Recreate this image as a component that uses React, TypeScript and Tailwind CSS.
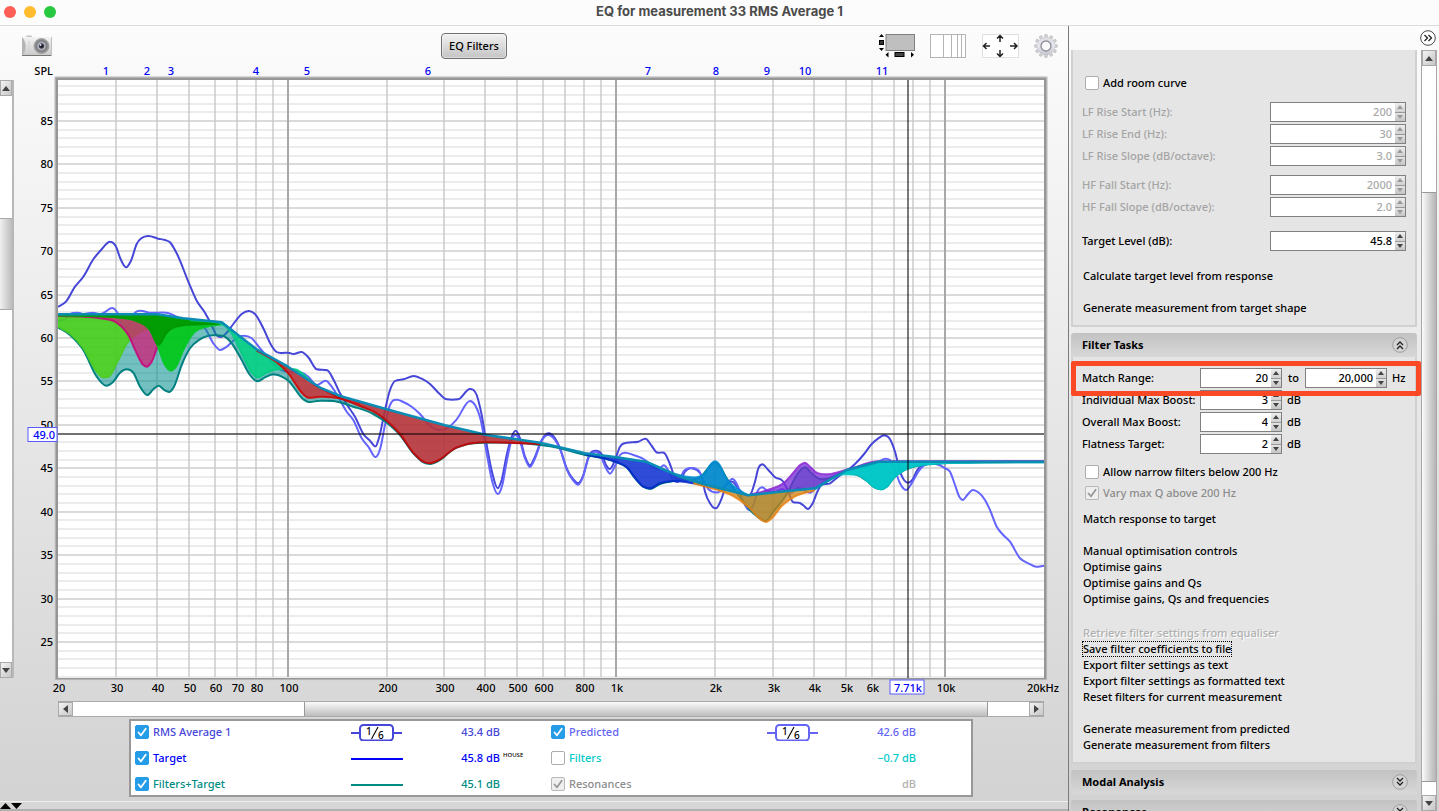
import React from "react";

type Point = [number, number];

/* ---------- chart geometry ---------- */

const PLOT = { left: 58, right: 1044, top: 80, bottom: 678 };

const xOf = (hz: number) => 287.6 + 328.7 * Math.log10(hz / 100);
const yOf = (db: number) => 121 + (85 - db) * 8.683;

/* Samples are kept in thirds of a chart unit, relative to a tile origin. */
const tile = (ox: number, oy: number, flat: number[]): Point[] => {
  const out: Point[] = [];
  for (let i = 0; i < flat.length; i += 2) out.push([ox + flat[i] / 3, oy + flat[i + 1] / 3]);
  return out;
};
const A = (f: number[]) => tile(50, 210, f);
const B = (f: number[]) => tile(240, 330, f);
const C = (f: number[]) => tile(520, 420, f);
const D = (f: number[]) => tile(730, 420, f);

/* Cubic Hermite curve with tangents weighted by the distance between samples. */
const smooth = (p: Point[]) => {
  const n = p.length;
  const slope = (i: number) => (p[i + 1][1] - p[i][1]) / (p[i + 1][0] - p[i][0]);
  const tangents = p.map((_, i) => {
    if (i === 0) return slope(0);
    if (i === n - 1) return slope(n - 2);
    const before = p[i][0] - p[i - 1][0];
    const after = p[i + 1][0] - p[i][0];
    const a = slope(i - 1);
    const b = slope(i);
    const mean = (a * after + b * before) / (before + after);
    if (a * b <= 0) return mean * 0.35;
    const limit = 3 * Math.min(Math.abs(a), Math.abs(b));
    return Math.sign(mean) * Math.min(Math.abs(mean), limit);
  });
  let d = `M${p[0][0].toFixed(1)} ${p[0][1].toFixed(1)}`;
  for (let i = 0; i < n - 1; i++) {
    const h = (p[i + 1][0] - p[i][0]) / 3;
    const c = [
      p[i][0] + h,
      p[i][1] + h * tangents[i],
      p[i + 1][0] - h,
      p[i + 1][1] - h * tangents[i + 1],
      p[i + 1][0],
      p[i + 1][1],
    ].map((v) => v.toFixed(1));
    d += `C${c.join(" ")}`;
  }
  return d;
};

const target: Point[] = [
  ...A([24, 313, 320, 313, 400, 325, 515, 337, 620, 418, 714, 470]),
  ...B([240, 173, 300, 198, 440, 238, 615, 286, 740, 315, 900, 338]),
  ...C([90, 75, 195, 100, 290, 112, 378, 125, 480, 170, 560, 195, 685, 226]),
  ...D([150, 215, 255, 205, 350, 150, 445, 125, 942, 125]),
];

const linear = (p: Point[]) => p.map(([x, y], i) => `${i ? "L" : "M"}${x.toFixed(1)} ${y.toFixed(1)}`).join("");

const targetAt = (x: number): number => {
  for (let i = 1; i < target.length; i++) {
    if (x <= target[i][0]) {
      const [x0, y0] = target[i - 1];
      const [x1, y1] = target[i];
      return y0 + ((y1 - y0) * (x - x0)) / (x1 - x0);
    }
  }
  return target[target.length - 1][1];
};

/* Area enclosed by a curve and the target line. */
const area = (p: Point[]) => {
  const x0 = p[0][0];
  const x1 = p[p.length - 1][0];
  const back: Point[] = [
    [x0, targetAt(x0)] as Point,
    ...target.filter(([x]) => x > x0 && x < x1),
    [x1, targetAt(x1)] as Point,
  ].reverse();
  return smooth(p) + back.map(([x, y]) => `L${x.toFixed(1)} ${y.toFixed(1)}`).join("") + "Z";
};

const measured: Point[] = [
  ...A([24, 291, 48, 275, 75, 230, 100, 200, 130, 148, 155, 118, 180, 95, 197, 108, 212, 148, 228, 172, 243, 152, 260, 102, 275, 84, 295, 78, 325, 86, 345, 90, 360, 97, 380, 130, 417, 220, 440, 272, 465, 308, 482, 340, 500, 376, 512, 381, 530, 368, 550, 342, 575, 312, 597, 303, 615, 312, 640, 355, 665, 408]),
  ...B([110, 66, 125, 69, 145, 68, 160, 72, 185, 66, 205, 82, 230, 118, 262, 121, 280, 148, 300, 190, 322, 226, 345, 260, 370, 312, 390, 332, 407, 349, 418, 320, 435, 240, 450, 180, 465, 153, 490, 148, 522, 138, 545, 146, 570, 162, 600, 193, 620, 208, 655, 208, 690, 177, 710, 195, 725, 255, 740, 345, 757, 430, 773, 475, 785, 450, 800, 375, 815, 320, 827, 302, 840, 325, 855, 380]),
  ...C([30, 136, 45, 110, 65, 60, 85, 40, 105, 55, 120, 85, 140, 145, 160, 178, 175, 190, 190, 165, 205, 112, 228, 92, 245, 103, 258, 135, 270, 147, 285, 120, 300, 80, 320, 68, 355, 65, 377, 56, 395, 78, 412, 98, 432, 98, 447, 125, 465, 172, 480, 182, 495, 155, 510, 145, 530, 150, 545, 170, 555, 215, 570, 250, 588, 265, 605, 235, 620, 192, 637, 185, 655, 205, 670, 222, 690, 225, 705, 185, 715, 145]),
  ...D([97, 133, 115, 150, 135, 172, 158, 183, 172, 208, 190, 247, 207, 248, 220, 256, 234, 267, 248, 250, 262, 215, 275, 195, 300, 190, 325, 170, 350, 153, 375, 132, 400, 105, 425, 72, 445, 55, 462, 46, 480, 58, 495, 95, 510, 155, 522, 180, 534, 188, 548, 178, 562, 150, 578, 135, 600, 130, 625, 133]),
];

const predicted: Point[] = [
  ...A([24, 332, 45, 328, 60, 312, 85, 308, 100, 312, 130, 308, 150, 313, 165, 306, 187, 294, 203, 310, 215, 340, 230, 350, 243, 335, 255, 308, 270, 302, 300, 308, 350, 308, 380, 320, 410, 332, 440, 342, 465, 355, 490, 400, 510, 420, 530, 410, 550, 392, 580, 377, 605, 385, 630, 415, 660, 450, 690, 478, 720, 486, 750, 487, 775, 500]),
  ...B([230, 165, 258, 152, 275, 170, 300, 210, 320, 245, 340, 270, 365, 325, 385, 350, 407, 381, 420, 358, 435, 285, 450, 225, 470, 209, 490, 216, 515, 230, 540, 252, 570, 287, 600, 300, 620, 296, 650, 268, 690, 213, 705, 225, 722, 270, 740, 370, 757, 455, 773, 492, 787, 465, 800, 395, 815, 330, 827, 315, 840, 335, 855, 385]),
  ...C([30, 141, 45, 115, 65, 62, 85, 45, 105, 60, 122, 92, 140, 148, 160, 182, 175, 194, 190, 168, 205, 115, 228, 95, 242, 108, 258, 145, 270, 161, 285, 138, 300, 105, 315, 98, 340, 105, 375, 120, 400, 142, 415, 147, 432, 136, 447, 155, 460, 182, 475, 185, 490, 155, 510, 144, 535, 150, 550, 180, 565, 207, 595, 217, 610, 205]),
  ...D([8, 177, 22, 195, 40, 245, 58, 271, 72, 250, 82, 215, 97, 202, 112, 212, 135, 215, 158, 207, 180, 220, 205, 203, 240, 218, 258, 205, 290, 180, 330, 160, 400, 143, 440, 130, 465, 116, 480, 120, 495, 150, 510, 190, 528, 210, 545, 190, 565, 155, 580, 138, 600, 131, 628, 135, 645, 145, 660, 155, 675, 195, 688, 230, 698, 240, 712, 225, 728, 210, 745, 217, 765, 240, 780, 270, 800, 320, 820, 345, 840, 365, 870, 415, 895, 430, 918, 440, 942, 437]),
];

const filtered: Point[] = [
  ...A([24, 352, 60, 375, 100, 420, 140, 500, 168, 527, 190, 515, 210, 488, 230, 478, 250, 488, 270, 530, 292, 555, 310, 538, 326, 527, 343, 540, 358, 546, 372, 530, 395, 465, 420, 415, 450, 388, 490, 376, 520, 378, 545, 400, 575, 450, 600, 495, 622, 514, 645, 502, 670, 493, 700, 502]),
  ...B([145, 152, 190, 208, 205, 216, 240, 212, 280, 213, 340, 230, 400, 252, 440, 278, 480, 315, 520, 370, 550, 397, 570, 402, 600, 390, 640, 358, 680, 343, 730, 338, 820, 338, 900, 345]),
  ...C([90, 79, 195, 105, 285, 125, 320, 142, 350, 180, 370, 200, 390, 207, 420, 192, 460, 183, 500, 180, 540, 172, 560, 150, 575, 132, 585, 127, 600, 140, 620, 175, 640, 205, 670, 245, 700, 280, 725, 298]),
  ...D([107, 303, 130, 275, 172, 220, 200, 165, 225, 142, 245, 160, 270, 177, 300, 175, 340, 160, 380, 164, 410, 182, 435, 203, 453, 208, 470, 200, 490, 175, 520, 152, 560, 138, 620, 131, 720, 128, 942, 127]),
];

const filterAreas: { points: Point[]; fill: string; stroke: string; opacity: number }[] = [
  { points: A([24, 350, 60, 371, 100, 415, 140, 485, 158, 502, 176, 500, 200, 460, 230, 402, 270, 366, 320, 350, 400, 340, 515, 341]), fill: "#4cd214", stroke: "#4ccc20", opacity: 0.85 },
  { points: A([24, 317, 150, 325, 200, 338, 235, 375, 260, 430, 280, 465, 291, 470, 305, 455, 325, 405, 350, 368, 400, 346, 515, 341]), fill: "#d21e78", stroke: "#c8007a", opacity: 0.75 },
  { points: A([24, 316, 200, 322, 260, 333, 300, 360, 320, 400, 345, 465, 363, 482, 378, 470, 400, 420, 430, 370, 470, 350, 515, 343]), fill: "#00c814", stroke: "#00c820", opacity: 0.9 },
  { points: A([24, 316, 200, 322, 260, 333, 300, 360, 325, 405, 350, 368, 400, 346, 515, 341]), fill: "#009600", stroke: "#009600", opacity: 0.85 },
  { points: A([420, 330, 515, 342, 545, 370, 580, 440, 605, 488, 622, 502, 650, 488, 685, 478, 735, 478, 800, 528, 870, 558]), fill: "#00d282", stroke: "#00cc80", opacity: 0.85 },
  { points: B([50, 62, 110, 97, 145, 130, 190, 193, 205, 203, 240, 200, 300, 205, 360, 222]), fill: "#cd2830", stroke: "#d20000", opacity: 0.8 },
  { points: B([220, 162, 300, 204, 360, 228, 410, 250, 440, 272, 480, 312, 520, 368, 550, 395, 570, 400, 600, 388, 640, 358, 680, 343, 730, 337, 900, 343]), fill: "#cd2830", stroke: "#c80000", opacity: 0.8 },
  { points: C([195, 103, 285, 125, 320, 142, 350, 180, 370, 200, 390, 205, 420, 190, 460, 183, 520, 190, 600, 208]), fill: "#1e32dc", stroke: "#0028c8", opacity: 0.82 },
  { points: C([378, 126, 480, 166, 530, 172, 555, 160, 575, 130, 585, 124, 597, 132, 615, 170, 650, 205, 685, 226]), fill: "#0087d2", stroke: "#008cd2", opacity: 0.85 },
  { points: C([520, 190, 600, 212, 640, 228, 690, 265, 720, 297, 738, 306, 755, 295, 785, 258, 820, 232, 885, 210]), fill: "#cd8214", stroke: "#e68214", opacity: 0.75 },
  { points: D([60, 224, 120, 208, 160, 190, 190, 158, 210, 135, 225, 128, 240, 140, 260, 158, 290, 163, 330, 155, 370, 143, 445, 124, 942, 123]), fill: "#7828d7", stroke: "#8c28d2", opacity: 0.75 },
  { points: D([255, 207, 340, 163, 380, 164, 410, 182, 435, 203, 453, 208, 470, 200, 490, 175, 520, 152, 560, 138, 620, 131, 720, 128, 942, 127]), fill: "#00c8c8", stroke: "#00c8c8", opacity: 0.95 },
];

const filterMarks: Point[] = [
  [106, 1], [147, 2], [171, 3], [256, 4], [307, 5], [428, 6], [648, 7], [716, 8], [767, 9], [805, 10], [882, 11],
];

const minorHz = [30, 40, 50, 60, 70, 80, 90, 200, 300, 400, 500, 600, 700, 800, 900, 2000, 3000, 4000, 5000, 6000, 7000, 8000, 9000];
const majorHz = [100, 1000, 10000];
const hzLabels: [number, string][] = [
  [20, "20"], [30, "30"], [40, "40"], [50, "50"], [60, "60"], [70, "70"], [80, "80"], [100, "100"], [200, "200"],
  [300, "300"], [400, "400"], [500, "500"], [600, "600"], [800, "800"], [1000, "1k"], [2000, "2k"], [3000, "3k"],
  [4000, "4k"], [5000, "5k"], [6000, "6k"], [10000, "10k"],
];
const dbLines = Array.from({ length: 69 }, (_, i) => 21 + i);

function Chart() {
  return (
    <svg viewBox="14 62 1054 638" className="block h-auto min-w-0 flex-1 text-[11px]" role="img" aria-label="SPL chart">
      <defs>
        <clipPath id="plot">
          <rect x={PLOT.left} y={PLOT.top} width={PLOT.right - PLOT.left} height={PLOT.bottom - PLOT.top} />
        </clipPath>
      </defs>
      <rect x="54" y="76" width="994" height="605" rx="2" fill="#d6d6d6" />
      <rect x="55" y="77" width="992" height="603" rx="1" fill="#b4b4b4" />
      <rect x="56" y="78" width="990" height="601" fill="#969696" />
      <rect x="58" y="80" width="986" height="597" fill="#fff" />
      <g shapeRendering="crispEdges">
        {dbLines.map((db) => (
          <rect key={db} x={58} y={Math.round(yOf(db)) - 1} width={986} height={2} fill={db % 5 ? "#ececec" : "#dadada"} />
        ))}
        {minorHz.map((hz) => (
          <rect key={hz} x={Math.round(xOf(hz)) - 1} y={80} width={2} height={597} fill="#c8c8c8" fillOpacity="0.7" />
        ))}
        {majorHz.map((hz) => (
          <rect key={hz} x={Math.round(xOf(hz)) - 1} y={80} width={2} height={597} fill="#a8a8a8" />
        ))}
      </g>
      <g clipPath="url(#plot)" fill="none" strokeLinejoin="round">
        <path d={smooth(measured)} stroke="#4646d8" strokeWidth="2" />
        <path d={smooth(predicted)} stroke="#6464ff" strokeWidth="2" />
        <path d={area(filtered)} fill="#008c8c" fillOpacity="0.55" />
        <path d={smooth(filtered)} stroke="#008080" strokeWidth="2" />
        {filterAreas.map((f, i) => (
          <g key={i}>
            <path d={area(f.points)} fill={f.fill} fillOpacity={f.opacity} />
            <path d={smooth(f.points)} stroke={f.stroke} strokeOpacity="0.85" strokeWidth="2" />
          </g>
        ))}
        <path d={linear(target)} stroke="#0a8cb4" strokeWidth="2.500" />
      </g>
      <g shapeRendering="crispEdges" fill="#000" fillOpacity="0.52">
        <rect x={58} y={433} width={986} height={2} />
        <rect x={907} y={80} width={2} height={598} />
      </g>
      <text x="53" y="75" textAnchor="end">SPL</text>
      <g fill="#0000f5" textAnchor="middle">
        {filterMarks.map(([x, n]) => (
          <text key={n} x={x} y={75}>{n}</text>
        ))}
      </g>
      <g textAnchor="end">
        {[85, 80, 75, 70, 65, 60, 55, 50, 45, 40, 35, 30, 25].map((db) => (
          <text key={db} x={53} y={Math.round(yOf(db)) + 4}>{db}</text>
        ))}
      </g>
      <g textAnchor="middle">
        {hzLabels.map(([hz, label]) => (
          <text key={hz} x={Math.round(xOf(hz)) + 1} y={692}>{label}</text>
        ))}
        <text x={1043} y={692}>20kHz</text>
      </g>
      <rect x="28" y="427.500" width="29" height="14" fill="#fff" stroke="#5a5aff" />
      <text x="55" y="439" textAnchor="end" fill="#0000f5">49.0</text>
      <rect x="890" y="680" width="34" height="14" fill="#fff" stroke="#5a5aff" />
      <text x="908" y="692" textAnchor="middle" fill="#0000f5">7.71k</text>
    </svg>
  );
}

/* ---------- controls ---------- */

type CheckProps = { label: string; checked?: boolean; disabled?: boolean; tone?: string };

function Check({ label, checked = false, disabled = false, tone = "text-black" }: CheckProps) {
  return (
    <label className={`flex h-4 items-center gap-1 ${tone}`}>
      <span className="relative flex size-[14px] shrink-0">
        <input
          type="checkbox"
          defaultChecked={checked}
          disabled={disabled}
          className="peer size-[14px] appearance-none rounded-[2px] border border-[#adadad] bg-white checked:border-[#259ce8] checked:bg-[#259ce8] disabled:border-[#b8b8b8] disabled:bg-[#efefef]"
        />
        <svg
          viewBox="0 0 14 14"
          className="pointer-events-none absolute inset-0 hidden size-[14px] stroke-white peer-checked:block peer-disabled:stroke-[#999]"
          fill="none"
          strokeWidth="1.8"
          strokeLinecap="round"
          strokeLinejoin="round"
          aria-hidden="true"
        >
          <path d="M3.500 7.500 L6 10.300 L10.700 3.800" />
        </svg>
      </span>
      {label}
    </label>
  );
}

function Arrow({ dir, className }: { dir: "up" | "down" | "left" | "right"; className: string }) {
  const d = { up: "M0 5L4 0L8 5Z", down: "M0 0L4 5L8 0Z", left: "M5 0L0 4L5 8Z", right: "M0 0L5 4L0 8Z" }[dir];
  const box = dir === "up" || dir === "down" ? "0 0 8 5" : "0 0 5 8";
  return (
    <svg viewBox={box} preserveAspectRatio="none" className={className} fill="currentColor" aria-hidden="true">
      <path d={d} />
    </svg>
  );
}

type SpinnerProps = { id: string; label: string; value: string; width: string; disabled?: boolean };

function Spinner({ id, label, value, width, disabled = false }: SpinnerProps) {
  const tone = disabled ? "text-[#a8a8a8]" : "text-black";
  const arrow = disabled ? "text-[#999]" : "text-[#444]";
  return (
    <span className={`flex h-5 shrink-0 border border-[#808080] bg-white ${width} ${tone}`}>
      <input
        id={id}
        aria-label={label}
        defaultValue={value}
        disabled={disabled}
        className="w-0 min-w-0 flex-1 bg-transparent pr-[3px] text-right outline-none"
      />
      <span className="flex w-[10px] flex-col gap-px bg-[#999]">
        <button type="button" disabled={disabled} aria-label={`Increase ${label}`} className={`flex flex-1 items-center justify-center bg-gradient-to-b from-[#eee] to-[#d0d0d0] ${arrow}`}>
          <Arrow dir="up" className="h-1 w-[6px]" />
        </button>
        <button type="button" disabled={disabled} aria-label={`Decrease ${label}`} className={`flex flex-1 items-center justify-center bg-gradient-to-b from-[#e4e4e4] to-[#c4c4c4] ${arrow}`}>
          <Arrow dir="down" className="h-1 w-[6px]" />
        </button>
      </span>
    </span>
  );
}

function TargetField({ id, label, value, disabled = false }: { id: string; label: string; value: string; disabled?: boolean }) {
  return (
    <div className="flex h-5 items-center justify-between">
      <label htmlFor={id} className={disabled ? "text-[#a4a4a4]" : "text-black"}>{label}</label>
      <Spinner id={id} label={label} value={value} width="w-[136px]" disabled={disabled} />
    </div>
  );
}

function BoostField({ id, label, value }: { id: string; label: string; value: string }) {
  return (
    <div className="flex h-5 items-center">
      <label htmlFor={id} className="w-[118px] whitespace-nowrap">{label}</label>
      <Spinner id={id} label={label} value={value} width="w-[82px]" />
      <span className="ml-[5px]">dB</span>
    </div>
  );
}

function Task({ children, disabled = false, focused = false }: { children: string; disabled?: boolean; focused?: boolean }) {
  return (
    <button
      type="button"
      disabled={disabled}
      className={`flex h-4 items-center self-start whitespace-nowrap px-px ${disabled ? "text-[#b0b0b0] [text-shadow:1px_1px_0_#fff]" : "text-black"} ${focused ? "outline-1 -outline-offset-1 outline-dotted outline-black" : ""}`}
    >
      {children}
    </button>
  );
}

function DoubleChevron({ dir, className }: { dir: "up" | "down" | "right"; className: string }) {
  const d = {
    up: "M5 8L8 5L11 8M5 12L8 9L11 12",
    down: "M5 4L8 7L11 4M5 8L8 11L11 8",
    right: "M4.500 5L7.500 8L4.500 11M8.500 5L11.500 8L8.500 11",
  }[dir];
  return (
    <svg viewBox="0 0 16 16" className={className} fill="none" aria-hidden="true">
      <circle cx="8" cy="8" r="7.300" fill={dir === "right" ? "#fff" : "#d4d4d4"} stroke={dir === "right" ? "#333" : "#999"} strokeWidth="0.900" />
      <path d={d} stroke="#222" strokeWidth="1.300" />
    </svg>
  );
}

function SectionHeader({ title, open = false }: { title: string; open?: boolean }) {
  return (
    <button type="button" aria-expanded={open} className="flex h-6 w-full shrink-0 items-center justify-between rounded-t-[3px] bg-gradient-to-b from-[#c2c2c2] to-[#d8d8d8] pr-[9px] pl-[11px] font-bold">
      {title}
      <DoubleChevron dir={open ? "up" : "down"} className="size-4" />
    </button>
  );
}

const scrollButton = "flex shrink-0 items-center justify-center border border-[#aaa] bg-gradient-to-br from-[#f4f4f4] to-[#c6c6c6] text-[#444]";

/* ---------- toolbar drawings ---------- */

function CameraIcon() {
  return (
    <svg viewBox="0 0 30 22" className="h-[22px] w-[30px]" aria-hidden="true">
      <defs>
        <linearGradient id="cam" x1="0" y1="0" x2="0" y2="1">
          <stop offset="0" stopColor="#f4f4f4" />
          <stop offset="1" stopColor="#c8c8c8" />
        </linearGradient>
        <radialGradient id="lens">
          <stop offset="0" stopColor="#111" />
          <stop offset="0.280" stopColor="#334" />
          <stop offset="0.420" stopColor="#b4b8c0" />
          <stop offset="0.700" stopColor="#7c7c80" />
          <stop offset="1" stopColor="#a8a8a8" />
        </radialGradient>
      </defs>
      <rect x="4" y="0.500" width="6" height="2" rx="1" fill="#c4c4c4" />
      <path d="M0 2H30V21H0C5 16 5 7 0 2Z" fill="url(#cam)" />
      <path d="M0 2C5 7 5 16 0 21Z" fill="#b4b4b4" />
      <path d="M7 6V16" stroke="#d0d0d0" />
      <path d="M0 20.500H30" stroke="#757575" />
      <path d="M29.500 2V21" stroke="#c0c0c0" />
      <circle cx="19.500" cy="11" r="7.500" fill="url(#lens)" stroke="#8c8c8c" strokeWidth="0.600" />
      <circle cx="18.500" cy="10" r="1" fill="#dfe6ff" />
    </svg>
  );
}

function LayoutIcon() {
  return (
    <svg viewBox="0 0 37 24" className="h-6 w-[37px]" aria-hidden="true">
      <rect x="8" y="0.500" width="28.500" height="16" fill="#bfbfbf" stroke="#808080" />
      <path d="M1 3L3.500 0L6 3ZM1 14L3.500 17L6 14Z" />
      <rect x="1.500" y="6.500" width="4" height="4" fill="#333" stroke="#000" />
      <path d="M10.500 18V23.500L7.500 20.700ZM33 18V23.500L36 20.700Z" />
      <rect x="17" y="18.500" width="9" height="4" fill="#444" stroke="#000" />
    </svg>
  );
}

function GridIcon() {
  return (
    <svg viewBox="0 0 37 24" className="h-6 w-[37px]" aria-hidden="true">
      <rect x="0.500" y="0.500" width="35" height="23" fill="#fff" stroke="#b4b4b4" />
      <path d="M13.500 0V24M21.500 0V24M27.500 0V24M31.500 0V24" stroke="#b4b4b4" />
    </svg>
  );
}

function PanIcon() {
  return (
    <svg viewBox="0 0 37 24" className="h-6 w-[37px]" aria-hidden="true">
      <rect x="0.500" y="0.500" width="36" height="23" fill="#fff" stroke="#e0e0e0" />
      <path
        d="M18 8V1.500M15 4.500L18 1.500L21 4.500M18 16V22.500M15 19.500L18 22.500L21 19.500M8 12H1.500M4.500 9L1.500 12L4.500 15M28 12H35M32 9L35 12L32 15"
        fill="none"
        stroke="#222"
        strokeWidth="1.500"
      />
    </svg>
  );
}

function GearIcon() {
  const teeth = Array.from({ length: 12 }, (_, i) => i * 30);
  return (
    <svg viewBox="0 0 24 24" className="size-6" aria-hidden="true">
      <defs>
        <linearGradient id="gear" x1="0" y1="0" x2="0" y2="1">
          <stop offset="0" stopColor="#dcdce0" />
          <stop offset="0.500" stopColor="#e6e6f0" />
          <stop offset="1" stopColor="#c4c4cc" />
        </linearGradient>
      </defs>
      {teeth.map((a) => (
        <path key={a} d="M10.300 4L10.900 0.600H13.100L13.700 4Z" fill="#d2d2d6" stroke="#a8a8ac" strokeWidth="0.500" transform={`rotate(${a} 12 12)`} />
      ))}
      <circle cx="12" cy="12" r="8.800" fill="url(#gear)" />
      <circle cx="12" cy="12" r="5" fill="#fafafa" stroke="#92929c" strokeWidth="1.400" />
    </svg>
  );
}

/* ---------- legend ---------- */

type LegendRow = {
  label: string;
  value: string;
  tone: string;
  mark: "smoothing" | "line" | "none";
  checked?: boolean;
  disabled?: boolean;
  valueTone?: string;
  note?: string;
};

const legendLeft: LegendRow[] = [
  { label: "RMS Average 1", value: "43.4 dB", tone: "text-[#4646d8]", mark: "smoothing", checked: true },
  { label: "Target", value: "45.8 dB", tone: "text-[#0000f5]", mark: "line", checked: true, note: "HOUSE" },
  { label: "Filters+Target", value: "45.1 dB", tone: "text-[#008c82]", mark: "line", checked: true },
];
const legendRight: LegendRow[] = [
  { label: "Predicted", value: "42.6 dB", tone: "text-[#6464f5]", mark: "smoothing", checked: true },
  { label: "Filters", value: "−0.7 dB", tone: "text-[#00c8c8]", mark: "none" },
  { label: "Resonances", value: "dB", tone: "text-[#8c8c8c]", valueTone: "text-[#b0b0b0]", mark: "none", checked: true, disabled: true },
];

function LegendMark({ mark }: { mark: LegendRow["mark"] }) {
  if (mark === "none") return <span className="w-[52px]" />;
  return (
    <svg viewBox="0 0 52 18" className="h-[18px] w-[52px]" aria-hidden="true">
      {mark === "line" ? (
        <path d="M0 10H52" stroke="currentColor" strokeWidth="2" />
      ) : (
        <>
          <path d="M0 10H8M43 10H51" stroke="currentColor" strokeWidth="2" />
          <rect x="9" y="2" width="33" height="15.500" rx="3.500" fill="#fff" stroke="currentColor" strokeWidth="2" />
          <path d="M20.500 16L27 4" stroke="#000" strokeWidth="1.100" />
          <text x="15" y="12" fontSize="10" fill="#000">1</text>
          <text x="27" y="16" fontSize="10" fill="#000">6</text>
        </>
      )}
    </svg>
  );
}

function LegendColumn({ rows }: { rows: LegendRow[] }) {
  return (
    <div className="flex w-[416px] flex-col gap-2">
      {rows.map((r) => (
        <div key={r.label} className={`flex h-[18px] items-center pl-1 ${r.tone}`}>
          <span className="w-[216px]">
            <Check label={r.label} checked={r.checked} disabled={r.disabled} tone={r.tone} />
          </span>
          <LegendMark mark={r.mark} />
          <span className={`w-[97px] text-right ${r.valueTone ?? ""}`}>{r.value}</span>
          {r.note && <sup className="ml-[3px] text-[6px] text-black">{r.note}</sup>}
        </div>
      ))}
    </div>
  );
}

/* ---------- page ---------- */

export default function App() {
  return (
    <div className="flex h-screen flex-col overflow-hidden bg-[#fbfbfb] font-['Noto_Sans','Open_Sans',sans-serif] text-[11px] leading-4 font-medium text-black">
      <header className="relative flex h-[26px] shrink-0 items-center justify-center border-b border-[#dcdcdc] bg-[#fcfcfc] pb-1">
        <div className="absolute top-[6px] left-1 flex gap-2">
          <button type="button" aria-label="Close" className="size-3 rounded-full bg-[#ff5f57]" />
          <button type="button" aria-label="Minimise" className="size-3 rounded-full bg-[#febc2e]" />
          <button type="button" aria-label="Zoom" className="size-3 rounded-full bg-[#28c840]" />
        </div>
        <h1 className="font-['Inter',sans-serif] text-[13px] font-bold text-[#4b4b4b]">EQ for measurement 33 RMS Average 1</h1>
      </header>

      <div className="flex min-h-0 flex-1 bg-gradient-to-b from-[#fcfcfc] to-[#d2d2d2]">
        <main className="flex min-w-0 flex-1 flex-col">
          <div className="relative flex h-9 shrink-0 items-center justify-between pt-[3px] pr-[10px] pl-[22px]">
            <button type="button" aria-label="Capture image">
              <CameraIcon />
            </button>
            <button type="button" className="absolute top-[7px] left-[441px] h-[26px] rounded-[4px] border border-[#707070] bg-gradient-to-b from-[#f2f2f2] to-[#c4c4c4] px-[7px] shadow-[inset_0_0_0_1px_#ffffff66]">
              EQ Filters
            </button>
            <div className="flex items-center gap-[15px]">
              <button type="button" aria-label="Graph layout"><LayoutIcon /></button>
              <button type="button" aria-label="Frequency axis"><GridIcon /></button>
              <button type="button" aria-label="Graph limits"><PanIcon /></button>
              <button type="button" aria-label="Settings"><GearIcon /></button>
            </div>
          </div>

          <div className="flex shrink-0">
            <div className="mt-[18px] mb-[22px] flex w-[14px] shrink-0 flex-col border-r-2 border-[#b8b8b8] bg-white">
              <button type="button" aria-label="Scroll up" className={`${scrollButton} h-4`}>
                <Arrow dir="up" className="h-[5px] w-2" />
              </button>
              <div className="h-[122px]" />
              <div className="h-[92px] border-y border-[#aaa] bg-gradient-to-r from-[#f0f0f0] to-[#bcbcbc]" />
              <div className="flex-1" />
              <button type="button" aria-label="Scroll down" className={`${scrollButton} h-4`}>
                <Arrow dir="down" className="h-[5px] w-2" />
              </button>
            </div>
            <Chart />
          </div>

          <div className="mt-px mr-[24px] ml-[58px] flex h-4 shrink-0 border-y border-[#aaa] bg-white">
            <button type="button" aria-label="Scroll left" className={`${scrollButton} w-[15px]`}>
              <Arrow dir="left" className="h-2 w-[5px]" />
            </button>
            <div className="w-[23.4%]" />
            <div className="flex-1 border-x border-[#999] bg-gradient-to-b from-[#fbfbfb] to-[#bdbdbd]" />
            <div className="w-[4.2%]" />
            <button type="button" aria-label="Scroll right" className={`${scrollButton} w-[15px]`}>
              <Arrow dir="right" className="h-2 w-[5px]" />
            </button>
          </div>

          <div className="mt-[2px] ml-[129px] flex w-[844px] shrink-0 border-2 border-[#989898] bg-white pt-[2px] pb-[2px]">
            <LegendColumn rows={legendLeft} />
            <LegendColumn rows={legendRight} />
          </div>

          <div className="mt-auto flex h-[10px] shrink-0 items-start border-t border-b-2 border-t-[#f0f0f0] border-b-[#b0b0b0] bg-[#d6d6d6] pt-px">
            <Arrow dir="up" className="h-[6px] w-[11px]" />
            <Arrow dir="down" className="h-[6px] w-[11px]" />
          </div>
        </main>

        <aside className="flex w-[371px] shrink-0 flex-col border-l border-[#7a7a7a]">
          <div className="flex h-6 shrink-0 items-center justify-end pr-[3px]">
            <button type="button" aria-label="Collapse panel">
              <DoubleChevron dir="right" className="size-4" />
            </button>
          </div>
          <div className="flex min-h-0 flex-1 pr-[2px] pl-[2px]">
            <div className="flex min-w-0 flex-1 flex-col overflow-hidden pr-1">
              <section className="flex shrink-0 flex-col border-x-2 border-b-2 border-[#d0d0d0] bg-[#e5e5e5] px-[9px] pt-[25px] pb-[9px]">
                <div className="pl-[3px]">
                  <Check label="Add room curve" />
                </div>
                <div className="mt-[11px] flex flex-col gap-[2px]">
                  <TargetField id="lf-start" label="LF Rise Start (Hz):" value="200" disabled />
                  <TargetField id="lf-end" label="LF Rise End (Hz):" value="30" disabled />
                  <TargetField id="lf-slope" label="LF Rise Slope (dB/octave):" value="3.0" disabled />
                </div>
                <div className="mt-[9px] flex flex-col gap-[2px]">
                  <TargetField id="hf-start" label="HF Fall Start (Hz):" value="2000" disabled />
                  <TargetField id="hf-slope" label="HF Fall Slope (dB/octave):" value="2.0" disabled />
                </div>
                <div className="mt-[14px]">
                  <TargetField id="target-level" label="Target Level (dB):" value="45.8" />
                </div>
                <div className="mt-[17px] flex flex-col gap-4">
                  <Task>Calculate target level from response</Task>
                  <Task>Generate measurement from target shape</Task>
                </div>
              </section>

              <div className="h-[6px] shrink-0" />
              <SectionHeader title="Filter Tasks" open />
              <section className="flex shrink-0 flex-col border-x-2 border-b-2 border-[#d0d0d0] bg-[#e5e5e5] px-[9px] pt-[11px] pb-[9px]">
                <div className="flex flex-col gap-[2px]">
                  <div className="relative z-10 flex h-5 items-center">
                    <label htmlFor="range-low" className="w-[118px]">Match Range:</label>
                    <Spinner id="range-low" label="Match range start" value="20" width="w-[82px]" />
                    <label htmlFor="range-high" className="w-[23px] pl-[6px]">to</label>
                    <Spinner id="range-high" label="Match range end" value="20,000" width="w-[82px]" />
                    <span className="ml-[5px]">Hz</span>
                    <span className="pointer-events-none absolute -top-[7px] -right-[15px] -bottom-[8px] -left-[11px] rounded-[2px] border-[5px] border-[#fa4924]" />
                  </div>
                  <BoostField id="individual" label="Individual Max Boost:" value="3" />
                  <BoostField id="overall" label="Overall Max Boost:" value="4" />
                  <BoostField id="flatness" label="Flatness Target:" value="2" />
                </div>
                <div className="mt-[10px] flex flex-col gap-[5px] pl-[3px]">
                  <Check label="Allow narrow filters below 200 Hz" />
                  <Check label="Vary max Q above 200 Hz" checked disabled tone="text-[#8c8c8c]" />
                </div>
                <div className="mt-[10px] flex flex-col">
                  <Task>Match response to target</Task>
                </div>
                <div className="mt-4 flex flex-col">
                  <Task>Manual optimisation controls</Task>
                  <Task>Optimise gains</Task>
                  <Task>Optimise gains and Qs</Task>
                  <Task>Optimise gains, Qs and frequencies</Task>
                </div>
                <div className="mt-[18px] flex flex-col">
                  <Task disabled>Retrieve filter settings from equaliser</Task>
                  <Task focused>Save filter coefficients to file</Task>
                  <Task>Export filter settings as text</Task>
                  <Task>Export filter settings as formatted text</Task>
                  <Task>Reset filters for current measurement</Task>
                </div>
                <div className="mt-4 flex flex-col">
                  <Task>Generate measurement from predicted</Task>
                  <Task>Generate measurement from filters</Task>
                </div>
              </section>

              <div className="h-[6px] shrink-0" />
              <SectionHeader title="Modal Analysis" />
              <div className="h-[6px] shrink-0" />
              <SectionHeader title="Resonances" />
            </div>

            <div className="flex w-4 shrink-0 flex-col border-x border-[#a8a8a8] bg-white">
              <button type="button" aria-label="Scroll up" className={`${scrollButton} h-4`}>
                <Arrow dir="up" className="h-[5px] w-2" />
              </button>
              <div className="h-[126px] shrink-0" />
              <div className="min-h-0 flex-1 border-y border-[#999] bg-gradient-to-r from-[#fbfbfb] to-[#b4b4b4]" />
              <div className="h-[13px] shrink-0" />
              <button type="button" aria-label="Scroll down" className={`${scrollButton} h-4`}>
                <Arrow dir="down" className="h-[5px] w-2" />
              </button>
            </div>
          </div>
        </aside>
      </div>
    </div>
  );
}
